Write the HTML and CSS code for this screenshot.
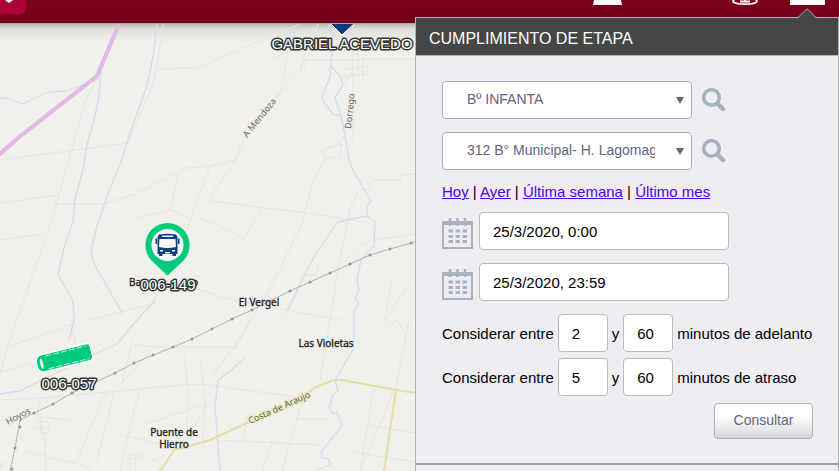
FILE: index.html
```html
<!DOCTYPE html>
<html lang="es">
<head>
<meta charset="utf-8">
<title>Cumplimiento de etapa</title>
<link rel="stylesheet" href="styles.css">
</head>
<body>
<header class="topbar">
  <svg class="menu-mark" width="26" height="14" viewBox="0 0 26 14" aria-hidden="true">
    <path d="M0 0H26V7Q26 14 19 14H0Z" fill="#b00038"/>
    <path d="M5 0H13L9 3Z" fill="#fff"/>
  </svg>
  <svg class="tool-marks" width="246" height="6" viewBox="593 0 246 6" aria-hidden="true">
    <path d="M594 0H621L622 5H593Z" fill="#fff"/>
    <ellipse cx="745" cy="1" rx="12" ry="3.2" fill="none" stroke="#fff" stroke-width="1.8"/>
    <path d="M745 0V2.500M740 1.500H750" stroke="#fff" stroke-width="1.800"/>
    <path d="M790 0H825V5H790Z" fill="#fff"/>
  </svg>
</header>

<main class="map">
  <svg class="map-canvas" role="img" aria-label="Mapa">
    <g transform="translate(0,-24)" fill="none" stroke-linejoin="round" stroke-linecap="round">
      <g class="track">
        <path d="M163 24L156 70L154 82L128 143L0 160"/>
        <path d="M157 69L194 68L210 62L300 24"/>
        <path d="M97 78L86 100L69 158L54 213L17 320L7 347L0 376"/>
        <path d="M0 203L57 195M0 240L44 234M54 204H104L135 194L178 172L186 168L210 166L235 160L244 148"/>
        <path d="M136 219L170 210L194 220M170 210L179 172"/>
        <path d="M210 201L306 213L370 223L375 229"/>
        <path d="M210 222L244 239L261 209"/>
        <path d="M210 197L235 161L240 147L245 137M290 40L280 95L274 99L302 69L303 60L420 59"/>
        <path d="M325 160L313 181L302 224L277 275L252 318L235 345L211 378"/>
        <path d="M415 174L401 175L400 180H373L369 188L358 191L350 208L338 270L330 320"/>
        <path d="M415 234L371 240L360 245L346 261H340M392 277L385 320L410 282"/>
        <path d="M210 167L197 200L188 228L160 285L147 314"/>
        <path d="M199 217L210 223M90 320L155 303M197 289L210 293L235 301L340 320M276 319L283 316L303 277L306 275H316L319 263"/>
        <path d="M75 320L71 324L77 350M0 372L30 364L70 357M7 347L75 323M132 344L155 347H235V349L250 320"/>
        <path d="M0 400L44 398L150 388L195 384L210 385L303 398"/>
        <path d="M157 344L115 390L97 460M132 342L122 382M105 394L77 460L91 471M140 390L132 418L120 470M184 355L188 390L187 440L206 406M200 357L205 400L203 450M147 424L210 403"/>
        <path d="M35 393L40 398L37 417H46L70 421M38 410L45 440L46 471M37 422H49V433H38M41 418V435M34 428H50M27 452L81 465M120 435L160 444"/>
        <path d="M330 320L320 381M409 320L396 385L360 471M384 330L396 320L405 333M374 387L360 471M303 398L282 471M297 419H326M272 442L262 471M217 440L321 445M368 425L415 433M353 452L415 462M246 417L244 440"/>
        <path d="M124 459H140V455H130V471M135 455V468M148 456L160 464M155 460L165 455"/>
        <path d="M353 24V140M340 30H365M339 35H358V75H340M342 60H358M342 70L367 66V74L342 78M363 54V80M352 72L344 84"/>
        <path d="M344 136L337 145L323 150L325 159L340 156L342 144L328 147M314 26L300 70M318 24L304 68M270 60L330 34L360 40"/>
      </g>
      <g class="river">
        <path d="M0 98H5L23 104L48 92L67 91L80 86L99 79M101 72L99 96L95 116L87 145L83 170L75 198L73 222L64 248L58 275L73 301L74 320L69 341"/>
        <path d="M157 24L153 57L147 86L130 133L121 162L107 196L96 230L91 250L93 262L108 288L122 313"/>
        <path d="M329 24L333 35L331 65L329 70L331 74L322 97L324 102L333 114L341 116L335 98L343 84L339 75L331 66M341 116L345 135L349 160L353 170L371 201L367 206V215L370 219L375 221L374 246L361 260L357 280L359 291L355 298L359 304L354 311L354 348L335 380L338 391L333 395L329 408L333 414L337 412L342 426L321 452L322 457L329 459L330 465L318 470"/>
        <path d="M367 216L347 220L338 222L315 255L303 278L289 309L287 311"/>
        <path d="M0 394L20 391L48 377L65 369L90 356L117 344L137 320L155 300M244 359L229 372L218 380L215 407L220 471M0 468L3 463"/>
      </g>
      <path class="highway-edge" d="M119 24L97 76L18 138L0 154"/>
      <path class="highway" d="M119 24L97 76L18 138L0 154"/>
      <path class="road" d="M160 471L167 461L174 450L210 440L247 423L300 399L316 387L334 380H342L380 387L415 393M396 390L384 471"/>
      <path class="rail" d="M10 471L15 448L20 420L34 413L53 404L72 393L115 373L134 363L173 347L192 339L232 319L252 310L290 291L310 282L330 273L350 264L370 255L390 249L415 242"/>
      <path class="rail-tick" d="M12 469h0M15 448h0M20 427h0M34 413h0M53 404h0M72 393h0M115 373h0M134 363h0M153 355h0M173 347h0M192 339h0M212 329h0M232 319h0M252 310h0M290 291h0M310 282h0M330 273h0M350 264h0M370 255h0M390 249h0M411 243h0"/>
    </g>
    <g transform="translate(0,-24)">
      <g class="town" text-anchor="middle">
        <text x="259" y="306">El Vergel</text>
        <text x="326" y="347">Las Violetas</text>
        <text x="174" y="436">Puente de</text>
        <text x="174" y="448">Hierro</text>
        <text x="135" y="286">Ba</text>
        <text x="195" y="286">o</text>
      </g>
      <g class="street">
        <text transform="translate(247,138) rotate(-51)">A Mendoza</text>
        <text transform="translate(351,129) rotate(-84)">Dorrego</text>
        <text transform="translate(8,425) rotate(-28)">Hoyos</text>
        <text class="street-on-road" transform="translate(250,424) rotate(-24)">Costa de Araujo</text>
      </g>
      <path d="M330 23L342 35L355 23Z" fill="#12387c" stroke="#fff" stroke-width="1"/>
      <path d="M167.500 276L151 260.500A22.500 22.500 0 1 1 184 260.500Z" fill="#00ca7b" stroke="#fff" stroke-opacity=".6"/>
      <circle cx="167.500" cy="245" r="16" fill="#f6f7f5"/>
      <g fill="#12407f">
        <path d="M159 234.500Q167.500 233 176 234.500L177.500 237V254H157.500V237Z"/>
        <path d="M155.500 238.500H157V244H155.500ZM178 238.500H179.500V244H178ZM159 253H162.500V256H159ZM172.500 253H176V256H172.500Z"/>
        <path d="M162 235.500H173V237H162ZM159.500 239H175.500L176 247Q167.500 249 159 247Z" fill="#f6f7f5"/>
        <path d="M160 250H163V251.500H160ZM172 250H175V251.500H172ZM165 252H170V253.500H165Z" fill="#f6f7f5"/>
      </g>
      <g transform="translate(64.500,358) rotate(-14)">
        <path d="M-23 -8H24Q27 -8 27 -5V5Q27 8 24 8H-23Q-28 7 -28 0T-23 -8Z" fill="#00ca7b" stroke="#fff" stroke-width="3" paint-order="stroke"/>
        <ellipse cx="-23.500" cy="0" rx="2.500" ry="6.500" fill="#edf7ef" stroke="#00ca7b" stroke-width="2"/>
        <path d="M-18 -6.500H24M-18 6.500H24" stroke="#b5efd7" stroke-dasharray="6 2"/>
      </g>
      <g class="unit" text-anchor="middle">
        <text x="342" y="49">GABRIEL ACEVEDO</text>
        <text x="168" y="290">006-149</text>
        <text x="69" y="389">006-057</text>
      </g>
    </g>
  </svg>
</main>

<section class="panel">
  <svg class="panel-arrow" width="20" height="11" viewBox="0 0 20 11" aria-hidden="true">
    <path d="M0 11L10 1L20 11Z" fill="#464646"/>
    <path d="M0.500 10L10 0.700L19.500 10" fill="none" stroke="#a9b5bd"/>
  </svg>
  <h1 class="panel-title">CUMPLIMIENTO DE ETAPA</h1>
  <form class="panel-form">
    <div class="row row-select">
      <span class="select-box">
        <select aria-label="Zona"><option>Bº INFANTA</option></select>
      </span>
      <button class="search" type="button" aria-label="Buscar zona">
        <svg width="24" height="24" viewBox="0 0 24 24"><circle cx="9.500" cy="9.500" r="7.800" fill="none" stroke="#a5b2bf" stroke-width="3.600"/><path d="M15.500 15.500L21 21" stroke="#a5b2bf" stroke-width="4.500" stroke-linecap="round"/></svg>
      </button>
    </div>
    <div class="row row-select">
      <span class="select-box">
        <select aria-label="Etapa"><option>312 B° Municipal- H. Lagomaggiore</option></select>
      </span>
      <button class="search" type="button" aria-label="Buscar etapa">
        <svg width="24" height="24" viewBox="0 0 24 24"><circle cx="9.500" cy="9.500" r="7.800" fill="none" stroke="#a5b2bf" stroke-width="3.600"/><path d="M15.500 15.500L21 21" stroke="#a5b2bf" stroke-width="4.500" stroke-linecap="round"/></svg>
      </button>
    </div>
    <nav class="ranges"><a href="#">Hoy</a> | <a href="#">Ayer</a> | <a href="#">Última semana</a> | <a href="#">Último mes</a></nav>
    <div class="row row-date">
      <label for="from" aria-label="Desde">
        <svg class="calendar" width="31" height="31" viewBox="0 0 31 31"><path d="M1 4H30V30H1Z" fill="none" stroke="#a7b3c0" stroke-width="2"/><path d="M1 6H30" stroke="#a7b3c0" stroke-width="2"/><path d="M8 0V8M15.500 0V8M23 0V8" stroke="#a7b3c0" stroke-width="2.500"/><path d="M6.500 13H25M6.500 18.500H25M6.500 23.500H25" stroke="#a7b3c0" stroke-width="3" stroke-dasharray="4.500 2.500"/></svg>
      </label>
      <input class="date" id="from" type="text" value="25/3/2020, 0:00">
    </div>
    <div class="row row-date">
      <label for="to" aria-label="Hasta">
        <svg class="calendar" width="31" height="31" viewBox="0 0 31 31"><path d="M1 4H30V30H1Z" fill="none" stroke="#a7b3c0" stroke-width="2"/><path d="M1 6H30" stroke="#a7b3c0" stroke-width="2"/><path d="M8 0V8M15.500 0V8M23 0V8" stroke="#a7b3c0" stroke-width="2.500"/><path d="M6.500 13H25M6.500 18.500H25M6.500 23.500H25" stroke="#a7b3c0" stroke-width="3" stroke-dasharray="4.500 2.500"/></svg>
      </label>
      <input class="date" id="to" type="text" value="25/3/2020, 23:59">
    </div>
    <div class="row row-minutes">
      <label for="early-min">Considerar entre</label>
      <input class="minutes" id="early-min" type="text" value="2">
      <label for="early-max">y</label>
      <input class="minutes" id="early-max" type="text" value="60">
      <span>minutos de adelanto</span>
    </div>
    <div class="row row-minutes">
      <label for="late-min">Considerar entre</label>
      <input class="minutes" id="late-min" type="text" value="5">
      <label for="late-max">y</label>
      <input class="minutes" id="late-max" type="text" value="60">
      <span>minutos de atraso</span>
    </div>
    <button class="submit" type="submit">Consultar</button>
  </form>
</section>
</body>
</html>
```
FILE: styles.css
```css
* { box-sizing: border-box; }

body {
  margin: 0;
  height: 100vh;
  display: flex;
  flex-direction: column;
  position: relative;
  overflow: hidden;
  font: 15px/17px "Liberation Sans", Arial, sans-serif;
  color: #000;
}

.topbar {
  display: flex;
  justify-content: space-between;
  flex: none;
  height: 24px;
  background: linear-gradient(#7f001c, #72001a);
  border-bottom: 1px solid #b5a5a4;
}

.topbar svg { display: block; }

.map {
  flex: 1;
  min-height: 0;
  background: linear-gradient(#bdbcb8, #dfded9 5px, #f1f0eb 18px);
}

.map-canvas { display: block; width: 100%; height: 100%; }

.track { stroke: #e6e5e0; stroke-width: 1; }
.river { stroke: #d3ddf2; stroke-width: 1.3; }
.highway-edge { stroke: #d5b5d8; stroke-width: 4; }
.highway { stroke: #e3bbe6; stroke-width: 3; }
.road { stroke: #e5dfaa; stroke-width: 2; }
.rail { stroke: #b5b4b2; stroke-width: 1; }
.rail-tick { stroke: #999896; stroke-width: 3; }

.town { font: 10px "Noto Sans", sans-serif; fill: #222; stroke: #222; stroke-width: .3px; }
.street { font: 9px "Noto Sans", sans-serif; fill: #666; }
.street-on-road { fill: #66644a; stroke: #eeebc7; stroke-width: 3px; paint-order: stroke; }

.unit {
  font: 15px "Liberation Sans", Arial, sans-serif;
  fill: #fff;
  stroke: #333;
  stroke-width: 3px;
  stroke-linejoin: round;
  paint-order: stroke;
}

.panel {
  position: absolute;
  top: 17px;
  right: 0;
  bottom: 0;
  width: 424px;
  max-width: 100%;
  background: #eeedf2;
  border: 1px solid #a9b5bd;
  border-bottom: 0;
}

.panel-arrow { position: absolute; top: -10px; right: 21px; }

.panel-title {
  margin: 0;
  padding: 12px 13px 7px;
  font-size: 16px;
  line-height: 18px;
  font-weight: 400;
  color: #fff;
  background: #464646;
  border-bottom: 1px solid #a9b5bd;
}

.panel-form {
  display: flex;
  flex-direction: column;
  padding: 25px;
  padding-left: 26px;
  border-bottom: 2px solid #a2a1a8;
}

.row { display: flex; align-items: center; }
.row-select { gap: 10px; margin-bottom: 13px; }
.row-date { gap: 6px; margin-bottom: 13px; }
.row-minutes { gap: 4px; margin-bottom: 6px; white-space: nowrap; }

.select-box { position: relative; width: 250px; }

.select-box::after {
  content: "";
  position: absolute;
  top: 16px;
  right: 8px;
  border: 4px solid transparent;
  border-top: 7px solid #66627c;
  border-bottom: 0;
  pointer-events: none;
}

select {
  display: block;
  appearance: none;
  width: 100%;
  height: 38px;
  padding: 0 36px 2px 24px;
  font: 14px/16px "Liberation Sans", Arial, sans-serif;
  color: #66627c;
  background: #fff;
  border: 1px solid #a3b2bd;
  border-radius: 4px;
}

.search { padding: 0; border: 0; background: none; line-height: 0; }

.ranges { margin-bottom: 12px; }
.ranges a { color: #5500ee; }

.calendar { display: block; margin-top: 5px; }

input {
  height: 38px;
  padding: 0 13px;
  font: 15px/17px "Liberation Sans", Arial, sans-serif;
  color: #000;
  background: #fff;
  border: 1px solid #bbb;
  border-radius: 4px;
}

.date { width: 250px; }
.minutes { width: 50px; }

.submit {
  align-self: flex-end;
  width: 99px;
  height: 36px;
  margin-top: 1px;
  margin-bottom: -1px;
  padding: 0 0 2px;
  font: 14px/16px "Liberation Sans", Arial, sans-serif;
  color: #66627c;
  background: linear-gradient(#fff 35%, #d6d6d6);
  border: 1px solid #a3b2bd;
  border-radius: 4px;
}
```
